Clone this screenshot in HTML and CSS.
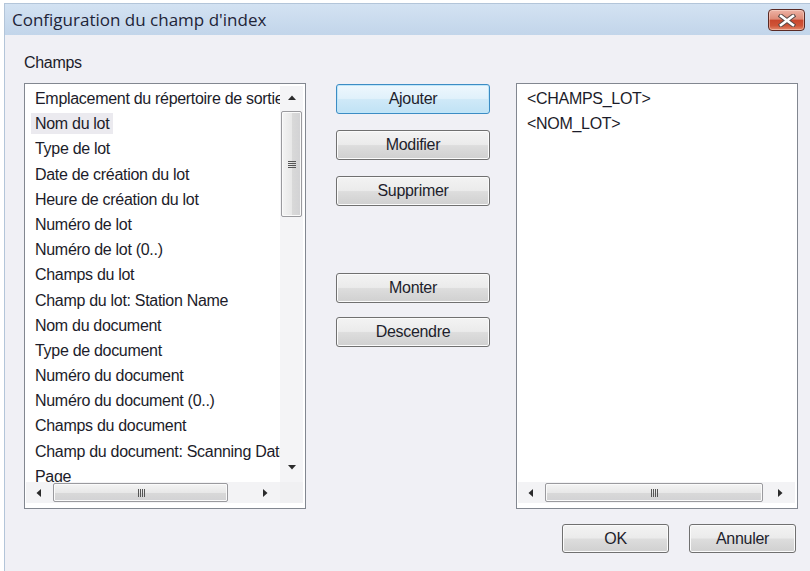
FILE: index.html
```html
<!DOCTYPE html>
<html lang="fr">
<head>
<meta charset="utf-8">
<title>Configuration du champ d'index</title>
<link rel="stylesheet" href="styles.css">
</head>
<body>
<div class="window">
  <div class="titlebar">
    <span class="title">Configuration du champ d'index</span>
    <div class="close">
      <svg width="18" height="13" viewBox="0 0 18 13">
        <path d="M3 2 L15 11 M15 2 L3 11" stroke="#5b4a46" stroke-width="4.6" stroke-linecap="square" fill="none"/>
        <path d="M3 2 L15 11 M15 2 L3 11" stroke="#ffffff" stroke-width="2.6" stroke-linecap="square" fill="none"/>
      </svg>
    </div>
  </div>
  <div class="client">
    <div class="main">
      <div class="label">Champs</div>
      <div></div>
      <div></div>

      <div class="listbox has-v">
        <div class="lb-view">
          <div class="item"><span>Emplacement du répertoire de sortie</span></div>
          <div class="item selected"><span>Nom du lot</span></div>
          <div class="item"><span>Type de lot</span></div>
          <div class="item"><span>Date de création du lot</span></div>
          <div class="item"><span>Heure de création du lot</span></div>
          <div class="item"><span>Numéro de lot</span></div>
          <div class="item"><span>Numéro de lot (0..)</span></div>
          <div class="item"><span>Champs du lot</span></div>
          <div class="item"><span>Champ du lot: Station Name</span></div>
          <div class="item"><span>Nom du document</span></div>
          <div class="item"><span>Type de document</span></div>
          <div class="item"><span>Numéro du document</span></div>
          <div class="item"><span>Numéro du document (0..)</span></div>
          <div class="item"><span>Champs du document</span></div>
          <div class="item"><span>Champ du document: Scanning Date</span></div>
          <div class="item"><span>Page</span></div>
        </div>
        <div class="vscroll">
          <div class="sb-btn v">
            <svg width="8" height="5" viewBox="0 0 8 5"><polygon points="0,5 4,0.5 8,5" fill="#2b2b2b"/></svg>
          </div>
          <div class="vthumb">
            <svg width="8" height="8" viewBox="0 0 8 8"><path d="M0 1.5H8M0 3.5H8M0 5.5H8M0 7.5H8" stroke="#555" stroke-width="1"/></svg>
          </div>
          <div class="sb-fill"></div>
          <div class="sb-btn v down">
            <svg width="8" height="5" viewBox="0 0 8 5"><polygon points="0,0 8,0 4,4.5" fill="#2b2b2b"/></svg>
          </div>
        </div>
        <div class="hscroll">
          <div class="sb-btn h">
            <svg width="5" height="8" viewBox="0 0 5 8"><polygon points="5,0 5,8 0.5,4" fill="#2b2b2b"/></svg>
          </div>
          <div class="hthumb left-thumb">
            <svg width="8" height="8" viewBox="0 0 8 8"><path d="M1.5 0V8M3.5 0V8M5.5 0V8M7.5 0V8" stroke="#555" stroke-width="1"/></svg>
          </div>
          <div class="sb-fill"></div>
          <div class="sb-btn h">
            <svg width="5" height="8" viewBox="0 0 5 8"><polygon points="0,0 4.5,4 0,8" fill="#2b2b2b"/></svg>
          </div>
        </div>
        <div class="corner"></div>
      </div>

      <div class="buttons">
        <div class="btn default">Ajouter</div>
        <div class="btn">Modifier</div>
        <div class="btn">Supprimer</div>
        <div class="btn sep">Monter</div>
        <div class="btn tight">Descendre</div>
      </div>

      <div class="listbox">
        <div class="lb-view right">
          <div class="item"><span>&lt;CHAMPS_LOT&gt;</span></div>
          <div class="item"><span>&lt;NOM_LOT&gt;</span></div>
        </div>
        <div class="hscroll">
          <div class="sb-btn h">
            <svg width="5" height="8" viewBox="0 0 5 8"><polygon points="5,0 5,8 0.5,4" fill="#2b2b2b"/></svg>
          </div>
          <div class="hthumb right-thumb">
            <svg width="8" height="8" viewBox="0 0 8 8"><path d="M1.5 0V8M3.5 0V8M5.5 0V8M7.5 0V8" stroke="#555" stroke-width="1"/></svg>
          </div>
          <div class="sb-fill"></div>
          <div class="sb-btn h">
            <svg width="5" height="8" viewBox="0 0 5 8"><polygon points="0,0 4.5,4 0,8" fill="#2b2b2b"/></svg>
          </div>
        </div>
      </div>
    </div>

    <div class="footer">
      <div class="btn small">OK</div>
      <div class="btn small">Annuler</div>
    </div>
  </div>
</div>
</body>
</html>
```

FILE: styles.css
```css
* { box-sizing: border-box; }

html, body {
  margin: 0;
  height: 100%;
  background: #ffffff;
  overflow: hidden;
}

body {
  padding: 3px 0 0 4px;
  font-family: "Liberation Sans", Arial, sans-serif;
  font-size: 16px;
  letter-spacing: -0.3px;
  color: #1c1c2a;
}

.window {
  height: 100%;
  border-top: 1px solid #b3c5d9;
  border-left: 1px solid #b3c5d9;
  background: #f0f0f5;
  display: flex;
  flex-direction: column;
}

.titlebar {
  height: 31px;
  flex: none;
  display: flex;
  align-items: center;
  justify-content: space-between;
  padding-left: 7px;
  background: linear-gradient(#d3e2f2, #c2d5ea);
}

.title {
  font-family: "Open Sans", "Liberation Sans", sans-serif;
  font-size: 17px;
  letter-spacing: 0;
  color: #1e2438;
}

.close {
  align-self: flex-start;
  margin-top: 5px;
  margin-right: 5px;
  width: 37px;
  height: 22px;
  border: 1px solid #5a2a24;
  border-radius: 4px;
  background: linear-gradient(#eeb3a5 0%, #dd8a77 45%, #c9472d 52%, #cf5437 78%, #e38a6d 100%);
  box-shadow: inset 0 0 0 1px rgba(255, 230, 220, 0.45);
  display: flex;
  align-items: center;
  justify-content: center;
}

.client {
  flex: 1;
  padding: 18px 0 0 19px;
}

.main {
  display: grid;
  grid-template-columns: 282px 210px 282px;
  grid-template-rows: 30px 426px;
}

.label {
  line-height: 20px;
}

.listbox {
  border: 1px solid #828790;
  background: #ffffff;
  padding: 2px 2px 5px 1px;
  display: grid;
  grid-template-columns: 1fr;
  grid-template-rows: 1fr 21px;
  min-height: 0;
}

.listbox.has-v {
  grid-template-columns: 1fr 23px;
}

.lb-view {
  overflow: hidden;
  padding-left: 5px;
  white-space: nowrap;
  min-height: 0;
  min-width: 0;
}

.item {
  line-height: 25.2px;
  height: 25.2px;
}

.item span {
  padding: 2px 4px;
}

.item.selected span {
  background: #ebeaef;
}

.vscroll {
  background: #f4f4f6;
  display: flex;
  flex-direction: column;
  min-height: 0;
}

.sb-btn {
  flex: none;
  display: flex;
  align-items: center;
  justify-content: center;
}

.sb-btn.v {
  height: 22px;
}

.sb-btn.v.down {
  height: 30px;
}

.sb-btn.h {
  width: 24px;
}

.sb-fill {
  flex: 1;
}

.vthumb {
  margin: 3px 1px 0;
  height: 106px;
  border: 1px solid #9a9a9e;
  border-radius: 2px;
  background: linear-gradient(to right, #f4f4f4, #e8e8e8 50%, #d9d9d9 51%, #d2d2d4);
  box-shadow: inset 0 0 0 1px #fafafa;
  display: flex;
  align-items: center;
  justify-content: center;
}

.hscroll {
  grid-column: 1;
  background: #f3f3f5;
  display: flex;
  align-items: stretch;
  padding-right: 3px;
}

.hthumb {
  margin: 1px 0 1px 3px;
  border: 1px solid #9a9a9e;
  border-radius: 2px;
  background: linear-gradient(#f4f4f4, #e8e8e8 50%, #d9d9d9 51%, #d2d2d4);
  box-shadow: inset 0 0 0 1px #fafafa;
  display: flex;
  align-items: center;
  justify-content: center;
}

.left-thumb { width: 175px; }
.right-thumb { width: 218px; }

.corner {
  background: #f0f0f2;
}

.lb-view.right {
  grid-column: 1;
}

.buttons {
  padding: 1px 26px 0 30px;
  display: flex;
  flex-direction: column;
}

.btn {
  height: 30px;
  border: 1px solid #707070;
  border-radius: 3px;
  background: linear-gradient(#f3f3f3 0%, #ebebeb 48%, #dddddd 52%, #d0d0d0 100%);
  box-shadow: inset 0 0 0 1px #fbfbfb;
  display: flex;
  align-items: center;
  justify-content: center;
  color: #1e1e2c;
}

.buttons .btn + .btn {
  margin-top: 16px;
}

.btn.default {
  border-color: #3c8cc4;
  background: linear-gradient(#eef7fd 0%, #e0f1fb 48%, #cfe9f8 52%, #c0e2f5 100%);
  box-shadow: inset 0 0 0 1px #bfe6f9;
}

.buttons .btn.sep {
  margin-top: 67px;
}

.buttons .btn.tight {
  margin-top: 14px;
}

.footer {
  width: 774px;
  margin-top: 15px;
  padding-right: 2px;
  display: flex;
  justify-content: flex-end;
  gap: 20px;
}

.btn.small {
  width: 107px;
  height: 29px;
}
```
